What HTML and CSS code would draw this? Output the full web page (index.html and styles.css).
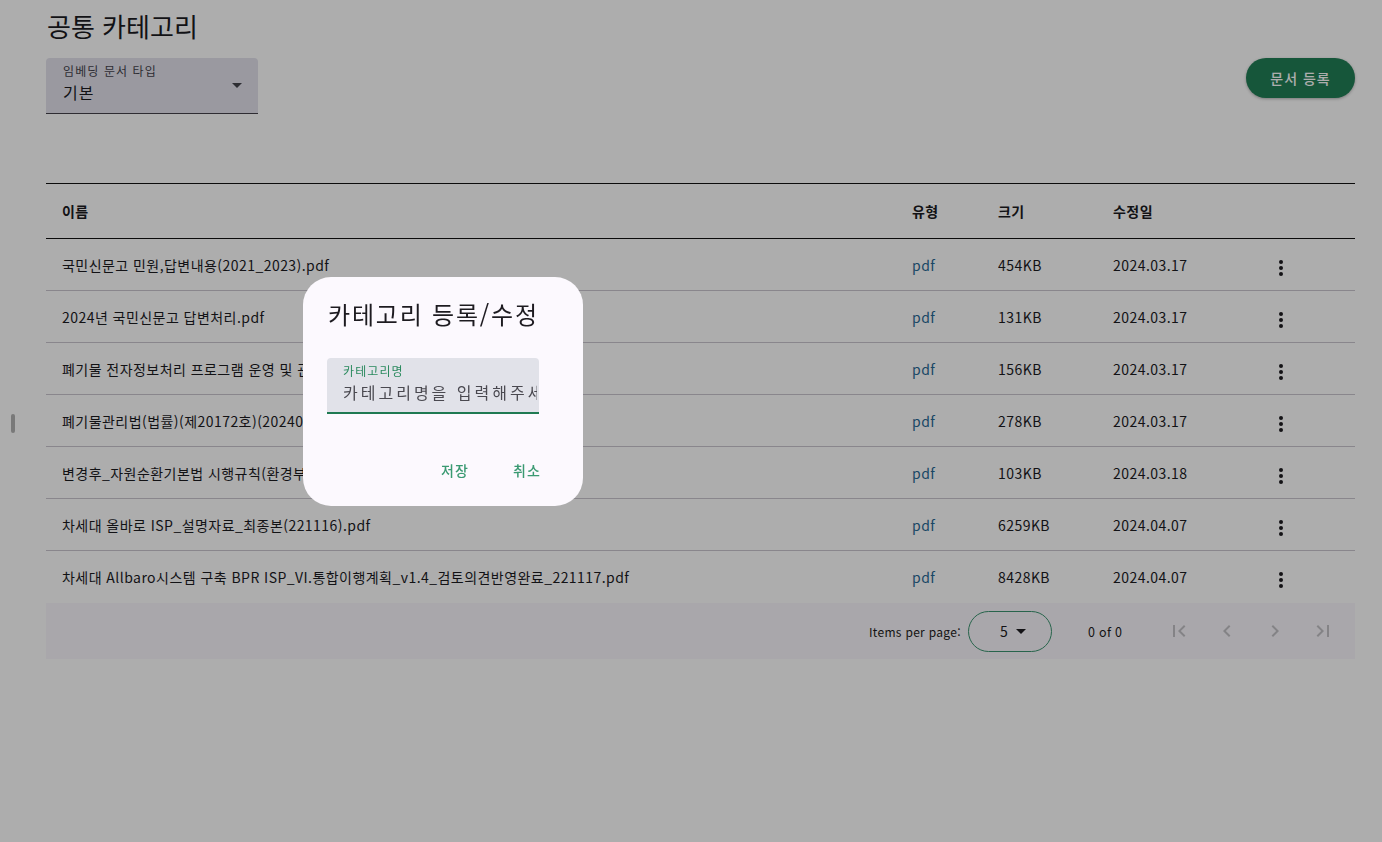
FILE: index.html
```html
<!DOCTYPE html>
<html lang="ko">
<head>
<meta charset="utf-8">
<title>공통 카테고리</title>
<link rel="stylesheet" href="styles.css">
</head>
<body>
<div class="side-handle"></div>
<main class="page">
  <h1 class="page-title">공통 카테고리</h1>
  <div class="toolbar">
    <div class="select-field">
      <div class="select-label">임베딩 문서 타입</div>
      <div class="select-value">기본</div>
      <span class="select-arrow"></span>
    </div>
    <button class="primary-btn">문서 등록</button>
  </div>

  <div class="doc-table">
    <div class="row head">
      <div class="cell name">이름</div>
      <div class="cell">유형</div>
      <div class="cell">크기</div>
      <div class="cell">수정일</div>
      <div class="cell"></div>
    </div>
    <div class="row">
      <div class="cell name">국민신문고 민원,답변내용(2021_2023).pdf</div>
      <div class="cell type">pdf</div>
      <div class="cell">454KB</div>
      <div class="cell">2024.03.17</div>
      <div class="cell act"><span class="kebab"><i></i><i></i><i></i></span></div>
    </div>
    <div class="row">
      <div class="cell name">2024년 국민신문고 답변처리.pdf</div>
      <div class="cell type">pdf</div>
      <div class="cell">131KB</div>
      <div class="cell">2024.03.17</div>
      <div class="cell act"><span class="kebab"><i></i><i></i><i></i></span></div>
    </div>
    <div class="row">
      <div class="cell name">폐기물 전자정보처리 프로그램 운영 및 관리에 관한 규정.pdf</div>
      <div class="cell type">pdf</div>
      <div class="cell">156KB</div>
      <div class="cell">2024.03.17</div>
      <div class="cell act"><span class="kebab"><i></i><i></i><i></i></span></div>
    </div>
    <div class="row">
      <div class="cell name">폐기물관리법(법률)(제20172호)(20240215).pdf</div>
      <div class="cell type">pdf</div>
      <div class="cell">278KB</div>
      <div class="cell">2024.03.17</div>
      <div class="cell act"><span class="kebab"><i></i><i></i><i></i></span></div>
    </div>
    <div class="row">
      <div class="cell name">변경후_자원순환기본법 시행규칙(환경부령).pdf</div>
      <div class="cell type">pdf</div>
      <div class="cell">103KB</div>
      <div class="cell">2024.03.18</div>
      <div class="cell act"><span class="kebab"><i></i><i></i><i></i></span></div>
    </div>
    <div class="row">
      <div class="cell name">차세대 올바로 ISP_설명자료_최종본(221116).pdf</div>
      <div class="cell type">pdf</div>
      <div class="cell">6259KB</div>
      <div class="cell">2024.04.07</div>
      <div class="cell act"><span class="kebab"><i></i><i></i><i></i></span></div>
    </div>
    <div class="row last">
      <div class="cell name">차세대 Allbaro시스템 구축 BPR ISP_VI.통합이행계획_v1.4_검토의견반영완료_221117.pdf</div>
      <div class="cell type">pdf</div>
      <div class="cell">8428KB</div>
      <div class="cell">2024.04.07</div>
      <div class="cell act"><span class="kebab"><i></i><i></i><i></i></span></div>
    </div>
    <div class="paginator">
      <span class="pg-label">Items per page:</span>
      <div class="pg-select"><span>5</span><span class="pg-arrow"></span></div>
      <span class="pg-range">0 of 0</span>
      <div class="pg-nav">
        <span class="pg-btn"><svg viewBox="0 0 24 24"><path d="M18.41 16.59L13.82 12l4.59-4.59L17 6l-6 6 6 6zM6 6h2v12H6z"/></svg></span>
        <span class="pg-btn"><svg viewBox="0 0 24 24"><path d="M15.41 7.41L14 6l-6 6 6 6 1.41-1.41L10.83 12z"/></svg></span>
        <span class="pg-btn"><svg viewBox="0 0 24 24"><path d="M10 6L8.59 7.41 13.17 12l-4.58 4.59L10 18l6-6z"/></svg></span>
        <span class="pg-btn"><svg viewBox="0 0 24 24"><path d="M5.59 7.41L10.18 12l-4.59 4.59L7 18l6-6-6-6zM16 6h2v12h-2z"/></svg></span>
      </div>
    </div>
  </div>
</main>

<div class="backdrop"></div>
<div class="dialog" role="dialog">
  <h2 class="dialog-title">카테고리 등록/수정</h2>
  <div class="text-field">
    <div class="tf-label">카테고리명</div>
    <div class="tf-input">카테고리명을 입력해주세요</div>
  </div>
  <div class="dialog-actions">
    <button class="text-btn">저장</button>
    <button class="text-btn">취소</button>
  </div>
</div>
</body>
</html>
```

FILE: styles.css
```css
* { box-sizing: border-box; }
html, body { margin: 0; padding: 0; }
body {
  font-family: "Noto Sans CJK KR", "Noto Sans", sans-serif;
  color: #1d1b20;
  background: #ffffff;
  width: 1382px;
  height: 842px;
  overflow: hidden;
  position: relative;
}
.side-handle {
  position: absolute;
  left: 11px;
  top: 414px;
  width: 4px;
  height: 19px;
  border-radius: 2px;
  background: #b3b3b3;
}
.page {
  padding: 8px 27px 0 46px;
}
.page-title {
  margin: 0 0 0 1px;
  font-size: 26px;
  line-height: 36px;
  font-weight: 400;
  color: #1b1b1f;
}
.toolbar {
  margin-top: 14px;
  display: flex;
  justify-content: space-between;
  align-items: flex-start;
}
.select-field {
  position: relative;
  width: 212px;
  height: 56px;
  background: #e3e2ec;
  border-radius: 4px 4px 0 0;
  border-bottom: 1px solid #44424a;
  padding: 6px 16px 0 17px;
}
.select-label {
  font-size: 12px;
  line-height: 14px;
  letter-spacing: 1.1px;
  color: #45444c;
}
.select-value {
  font-size: 16px;
  line-height: 22px;
  margin-top: 3px;
  letter-spacing: 1px;
  color: #1b1b1f;
}
.select-arrow {
  position: absolute;
  right: 16px;
  top: 25px;
  width: 0;
  height: 0;
  border-left: 5px solid transparent;
  border-right: 5px solid transparent;
  border-top: 5px solid #45444c;
}
.primary-btn {
  height: 40px;
  width: 109px;
  border: none;
  border-radius: 20px;
  background: #217f56;
  color: #ffffff;
  font-family: inherit;
  font-size: 14px;
  font-weight: 500;
  letter-spacing: 1px;
  box-shadow: 0 1px 3px rgba(0,0,0,0.3);
}
.doc-table {
  margin-top: 69px;
  border-top: 1px solid #111;
}
.row {
  display: grid;
  grid-template-columns: 866px 86px 115px 144px 98px;
  height: 52px;
  align-items: center;
  border-bottom: 1px solid #cac6cf;
  font-size: 14px;
  letter-spacing: 0.45px;
  color: #1b1b1f;
}
.row.head {
  height: 55px;
  border-bottom: 1px solid #111;
  font-weight: 700;
}
.row.last { border-bottom: none; }
.cell { white-space: nowrap; overflow: hidden; }
.cell.name { padding-left: 16px; }
.cell.type { color: #2a6a96; }
.cell.act { padding-left: 4px; }
.kebab {
  width: 40px;
  height: 40px;
  display: flex;
  flex-direction: column;
  align-items: center;
  justify-content: center;
  gap: 2px;
  padding-top: 6px;
}
.kebab i {
  display: block;
  width: 4px;
  height: 4px;
  border-radius: 50%;
  background: #1d1b20;
}
.paginator {
  height: 56px;
  background: #f9f7fc;
  display: flex;
  align-items: center;
  padding-left: 823px;
  font-size: 12px;
  letter-spacing: 0.3px;
  color: #1d1b20;
}
.pg-label { width: 99px; }
.pg-select {
  width: 84px;
  height: 41px;
  border: 1px solid #3b9470;
  border-radius: 21px;
  display: flex;
  align-items: center;
  padding-left: 31px;
  font-size: 14px;
  gap: 8px;
}
.pg-arrow {
  width: 0;
  height: 0;
  border-left: 5px solid transparent;
  border-right: 5px solid transparent;
  border-top: 5px solid #1d1b20;
}
.pg-range {
  margin-left: 36px;
  width: 67px;
  font-size: 12.5px;
}
.pg-nav { display: flex; }
.pg-btn {
  width: 48px;
  height: 40px;
  display: flex;
  align-items: center;
  justify-content: center;
}
.pg-btn svg { width: 24px; height: 24px; fill: #c3c2c6; }

.backdrop {
  position: fixed;
  inset: 0;
  background: rgba(0,0,0,0.32);
}
.dialog {
  position: fixed;
  left: 303px;
  top: 277px;
  width: 280px;
  height: 229px;
  background: #fcf9fe;
  border-radius: 28px;
  padding: 21px 0 16px 0;
}
.dialog-title {
  margin: 0;
  padding: 0 24px 0 25px;
  font-size: 24px;
  line-height: 32px;
  font-weight: 400;
  letter-spacing: 1.8px;
  color: #1d1b20;
}
.text-field {
  margin: 28px 0 0 24px;
  width: 212px;
  height: 56px;
  background: #e1e2e9;
  border-radius: 4px 4px 0 0;
  border-bottom: 2px solid #1f7a52;
  padding: 6px 0 0 16px;
  overflow: hidden;
}
.tf-label {
  font-size: 12px;
  line-height: 14px;
  letter-spacing: 1.1px;
  color: #2a8a5e;
}
.tf-input {
  font-size: 16px;
  line-height: 22px;
  margin-top: 3px;
  letter-spacing: 3px;
  color: #4a4950;
  white-space: nowrap;
  overflow: hidden;
  width: 194px;
}
.dialog-actions {
  margin-top: 36px;
  padding: 0 24px;
  display: flex;
  justify-content: flex-end;
  gap: 8px;
}
.text-btn {
  min-width: 64px;
  height: 40px;
  padding: 0 12px;
  border: none;
  background: transparent;
  color: #3a9a72;
  font-family: inherit;
  font-size: 14px;
  font-weight: 500;
  letter-spacing: 1px;
}
```
